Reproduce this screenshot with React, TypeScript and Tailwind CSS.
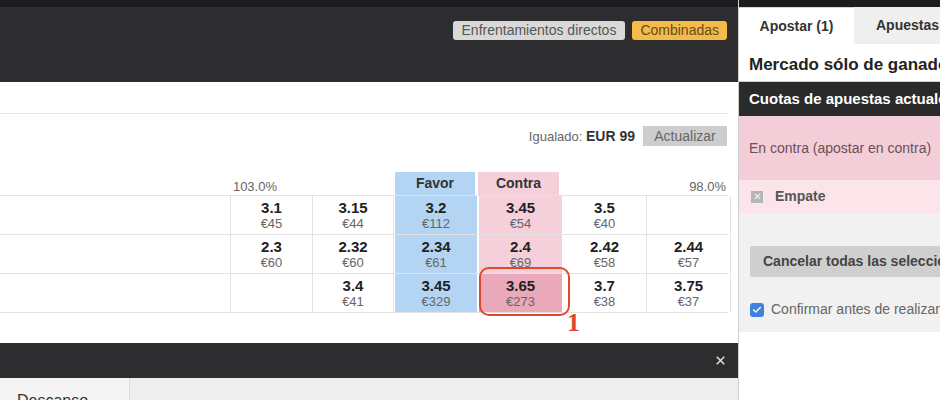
import { X, Check } from 'lucide-react'

type Cell = { odds: string; amt: string } | null

const rows: Cell[][] = [
  [{ odds: '3.1', amt: '€45' }, { odds: '3.15', amt: '€44' }, { odds: '3.2', amt: '€112' }, { odds: '3.45', amt: '€54' }, { odds: '3.5', amt: '€40' }, null],
  [{ odds: '2.3', amt: '€60' }, { odds: '2.32', amt: '€60' }, { odds: '2.34', amt: '€61' }, { odds: '2.4', amt: '€69' }, { odds: '2.42', amt: '€58' }, { odds: '2.44', amt: '€57' }],
  [null, { odds: '3.4', amt: '€41' }, { odds: '3.45', amt: '€329' }, { odds: '3.65', amt: '€273' }, { odds: '3.7', amt: '€38' }, { odds: '3.75', amt: '€37' }],
]

const widths = ['w-[82px]', 'w-[81px]', 'w-[82px]', 'w-[83px]', 'w-[84px]', 'w-[84px]']

function OddsCell({ cell, col, hot }: { cell: Cell; col: number; hot: boolean }) {
  const bg =
    col === 2 ? 'bg-[#b3d5f3] mx-[1px]' :
    col === 3 ? (hot ? 'bg-[#eaa9bb] mx-[1px]' : 'bg-[#f5d0da] mx-[1px]') :
    'border-r border-[#e3e3e3]'
  return (
    <div className={`${widths[col]} shrink-0 flex flex-col items-center justify-center ${bg}`}>
      {cell && (
        <>
          <span className="text-[15px] leading-[17px] font-bold text-[#222]">{cell.odds}</span>
          <span className="text-[13px] leading-[15px] text-[#666]">{cell.amt}</span>
        </>
      )}
    </div>
  )
}

export default function App() {
  return (
    <div className="flex w-[940px] h-[400px] overflow-hidden bg-white font-['Liberation_Sans',Arial,sans-serif]">
      {/* Main market */}
      <div className="w-[738px] shrink-0 flex flex-col relative">
        <div className="h-[7px] shrink-0 bg-[#1c1c1e]" />
        <div className="h-[75px] shrink-0 bg-[#2d2d2f] flex justify-end items-start gap-[7px] pt-[14px] pr-[11px]">
          <button className="h-[19px] px-[9px] rounded-[3px] bg-[#d9d9d9] text-[14px] text-[#555] leading-[19px]">Enfrentamientos directos</button>
          <button className="h-[19px] px-[8px] rounded-[3px] bg-[#f2bb4c] text-[14px] text-[#6b4a14] leading-[19px]">Combinadas</button>
        </div>
        <div className="h-[32px] shrink-0 border-b border-[#e6e6e6] mr-[10px]" />

        <div className="flex shrink-0 justify-end items-center gap-[8px] pr-[11px] mt-[12px] h-[20px]">
          <span className="text-[13px] text-[#666]">Igualado: <b className="text-[14px] text-[#333]">EUR 99</b></span>
          <button className="h-[20px] w-[84px] bg-[#cdcdcd] text-[14px] text-[#666]">Actualizar</button>
        </div>

        {/* Header row */}
        <div className="flex shrink-0 mt-[26px] h-[23px] items-end">
          <div className="w-[231px] shrink-0" />
          <div className="w-[163px] shrink-0 text-right pr-[117px] text-[13px] text-[#666] leading-[14px] pb-[1px]">103.0%</div>
          <div className="w-[80px] shrink-0 ml-[1px] h-full bg-[#b3d5f3] flex items-center justify-center text-[14px] font-bold text-[#333]">Favor</div>
          <div className="w-[81px] shrink-0 ml-[3px] h-full bg-[#f5d0da] flex items-center justify-center text-[14px] font-bold text-[#333]">Contra</div>
          <div className="w-[168px] shrink-0 text-right pr-[1px] text-[13px] text-[#666] leading-[14px] pb-[1px]">98.0%</div>
        </div>

        <div className="shrink-0 border-t border-[#e3e3e3] w-[728px]">
          {rows.map((r, i) => (
            <div key={i} className="flex h-[39px] border-b border-[#e3e3e3]">
              <div className="w-[231px] shrink-0 border-r border-[#e3e3e3]" />
              {r.map((c, j) => (
                <OddsCell key={j} cell={c} col={j} hot={i === 2 && j === 3} />
              ))}
            </div>
          ))}
        </div>

        {/* annotation */}
        <div className="absolute left-[479px] top-[267px] w-[91px] h-[49px] border-2 border-[#e0482b] rounded-[10px]" />
        <span className="absolute left-[567px] top-[308px] text-[26px] leading-[30px] font-bold text-[#e0482b] font-['Liberation_Serif',serif]">1</span>

        <div className="mt-[30px] h-[35px] shrink-0 bg-[#2d2d2f] flex items-center justify-end pr-[11px]">
          <X size={13} strokeWidth={3.2} className="text-[#d6d6d6]" />
        </div>
        <div className="flex-1 bg-[#eeeeee] flex">
          <div className="w-[130px] bg-[#f4f4f4] border-r border-[#dcdcdc] pl-[17px] pt-[11px] text-[16px] text-[#333]">Descanso</div>
        </div>
      </div>

      {/* Bet slip */}
      <div className="flex-1 flex flex-col border-l border-[#cfcfcf] overflow-hidden whitespace-nowrap">
        <div className="h-[7px] shrink-0 bg-[#1c1c1e]" />
        <div className="flex h-[37px] shrink-0">
          <div className="w-[115px] shrink-0 bg-white border-t border-[#f3d88a] flex items-center justify-center text-[14px] font-bold text-[#333]">Apostar (1)</div>
          <div className="flex-1 bg-[#efefef] flex items-center pl-[22px] text-[14px] font-bold text-[#333]">Apuestas</div>
        </div>
        <div className="h-[38px] shrink-0 flex items-center pt-[4px] pl-[10px] text-[17px] font-bold text-[#222] border-b border-[#d0d0d0]">Mercado sólo de ganador</div>
        <div className="h-[34px] shrink-0 bg-[#2a2a2a] flex items-center pl-[10px] text-[15px] font-bold text-white">Cuotas de apuestas actuales</div>
        <div className="h-[64px] shrink-0 bg-[#f3cdd7] flex items-center pl-[10px] text-[14px] text-[#6b5058]">En contra (apostar en contra)</div>
        <div className="h-[33px] shrink-0 bg-[#fbe5eb] flex items-center pl-[12px] gap-[12px]">
          <span className="w-[12px] h-[12px] bg-[#b5b5b5] flex items-center justify-center">
            <X size={9} strokeWidth={3} className="text-[#eee]" />
          </span>
          <span className="text-[14px] font-bold text-[#555]">Empate</span>
        </div>
        <div className="h-[119px] shrink-0 bg-[#f1f1f1] pl-[11px] pt-[33px]">
          <div className="h-[31px] bg-[#cfcfcf] rounded-l-[2px] flex items-center pl-[13px] text-[14px] font-bold text-[#444]">Cancelar todas las selecciones</div>
          <div className="flex items-center gap-[7px] mt-[22px]">
            <span className="w-[14px] h-[14px] rounded-[3px] bg-[#3f83e0] flex items-center justify-center">
              <Check size={10} strokeWidth={3.5} className="text-white" />
            </span>
            <span className="text-[14px] text-[#666]">Confirmar antes de realizar</span>
          </div>
        </div>
        <div className="flex-1 bg-white" />
      </div>
    </div>
  )
}
